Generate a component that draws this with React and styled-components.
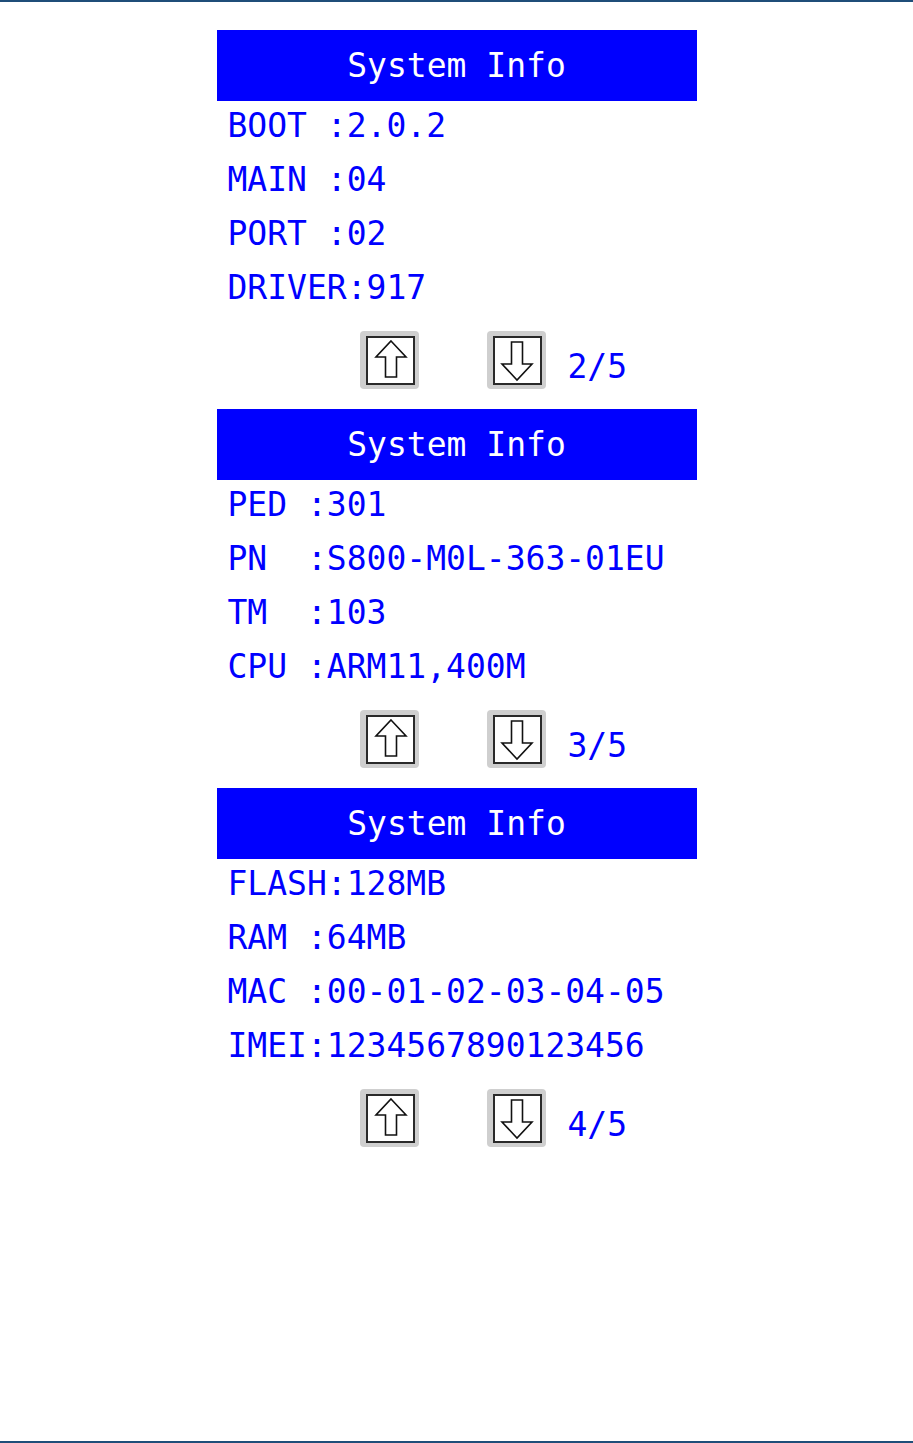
import React from "react";
import styled, { createGlobalStyle } from "styled-components";

const Global = createGlobalStyle`
  html, body { margin: 0; padding: 0; background: #ffffff; }
  * { box-sizing: border-box; }
`;

const Page = styled.div`
  width: 913px;
  height: 1443px;
  border-top: 2px solid #1f4e79;
  border-bottom: 2px solid #1f4e79;
  padding-top: 28px;
  display: flex;
  flex-direction: column;
  align-items: center;
  font-family: "DejaVu Sans Mono", "Liberation Mono", monospace;
`;

const Screen = styled.section`
  width: 480px;
  display: flex;
  flex-direction: column;
`;

const TitleBar = styled.div`
  height: 71px;
  background: #0000ff;
  color: #ffffff;
  font-size: 33px;
  line-height: 71px;
  text-align: center;
  white-space: pre;
`;

const List = styled.div`
  display: flex;
  flex-direction: column;
  padding-left: 11px;
`;

const Row = styled.div`
  height: 54px;
  font-size: 33px;
  line-height: 50px;
  color: #0000ff;
  white-space: pre;
`;

const Footer = styled.div`
  height: 92px;
  padding-top: 14px;
  padding-left: 143px;
  display: flex;
  align-items: flex-start;
`;

const KeyButton = styled.div`
  width: 59px;
  height: 58px;
  background: #cfcfcf;
  border-radius: 4px;
  padding: 5px 4px 4px 6px;
  margin-right: ${(p) => p.$gap}px;
`;

const KeyFace = styled.div`
  width: 49px;
  height: 49px;
  background: #ffffff;
  border: 2px solid #2a2a2a;
  display: flex;
  align-items: center;
  justify-content: center;
`;

const PageNo = styled.div`
  font-size: 33px;
  line-height: 50px;
  margin-top: 11px;
  color: #0000ff;
  white-space: pre;
`;

const UpArrow = () => (
  <svg width="45" height="45" viewBox="0 0 45 45">
    <polygon
      points="23,3 38,19 28.5,19 28.5,39 17.5,39 17.5,19 8,19"
      fill="#fff"
      stroke="#111"
      strokeWidth="1.6"
      strokeLinejoin="miter"
    />
  </svg>
);

const DownArrow = () => (
  <svg width="45" height="45" viewBox="0 0 45 45">
    <polygon
      points="16.5,4 27.5,4 27.5,26 37,26 22,42 7,26 16.5,26"
      fill="#fff"
      stroke="#111"
      strokeWidth="1.6"
      strokeLinejoin="miter"
    />
  </svg>
);

const screens = [
  { rows: ["BOOT :2.0.2", "MAIN :04", "PORT :02", "DRIVER:917"], page: "2/5" },
  {
    rows: ["PED :301", "PN  :S800-M0L-363-01EU", "TM  :103", "CPU :ARM11,400M"],
    page: "3/5",
  },
  {
    rows: ["FLASH:128MB", "RAM :64MB", "MAC :00-01-02-03-04-05", "IMEI:1234567890123456"],
    page: "4/5",
  },
];

export default function App() {
  return (
    <>
      <Global />
      <Page>
        {screens.map((s) => (
          <Screen key={s.page}>
            <TitleBar>System Info</TitleBar>
            <List>
              {s.rows.map((r) => (
                <Row key={r}>{r}</Row>
              ))}
            </List>
            <Footer>
              <KeyButton $gap={68}>
                <KeyFace>
                  <UpArrow />
                </KeyFace>
              </KeyButton>
              <KeyButton $gap={22}>
                <KeyFace>
                  <DownArrow />
                </KeyFace>
              </KeyButton>
              <PageNo>{s.page}</PageNo>
            </Footer>
          </Screen>
        ))}
      </Page>
    </>
  );
}
